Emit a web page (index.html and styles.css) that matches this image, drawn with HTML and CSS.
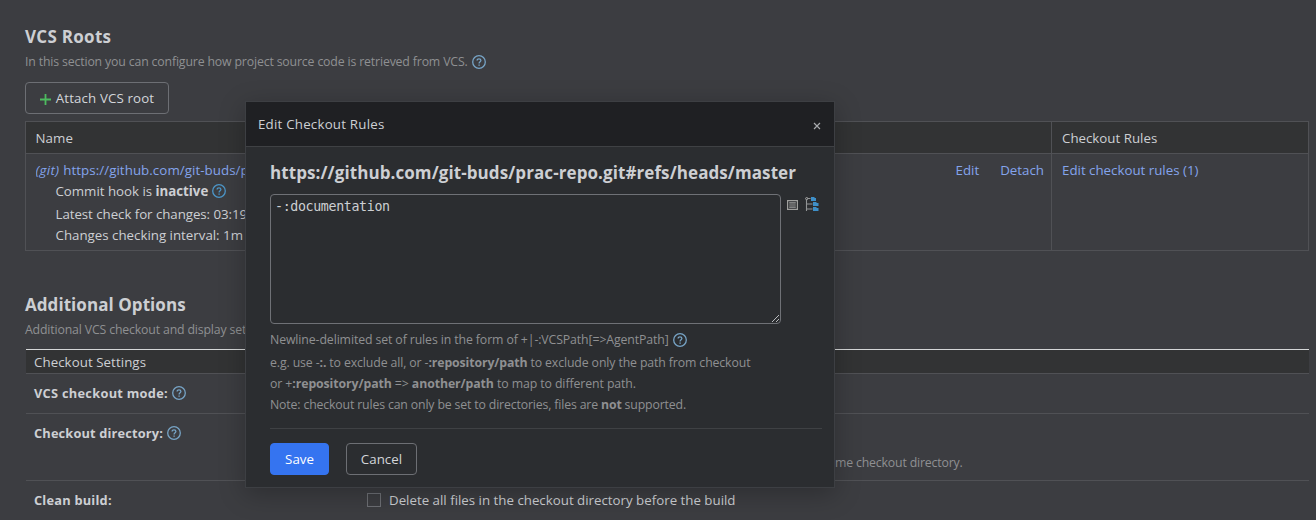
FILE: index.html
```
<!DOCTYPE html>
<html lang="en">
<head>
<meta charset="utf-8">
<title>Version Control Settings</title>
<link rel="stylesheet" href="styles.css">
</head>
<body>
<svg width="0" height="0" class="defs">
  <symbol id="help" viewBox="0 0 14 14">
    <circle cx="7" cy="7" r="6.3" fill="none" stroke="currentColor" stroke-width="1.3"/>
    <path d="M5.1 5.6C5.1 4.5 5.9 3.9 7 3.9s1.9.6 1.9 1.6C8.9 6.7 7.1 6.8 7.1 8.4" fill="none" stroke="currentColor" stroke-width="1.3"/>
    <path d="M6.4 9.4h1.4v1.3H6.4z" fill="currentColor"/>
  </symbol>
</svg>
<main class="page">
  <h2 class="heading"><span class="t-roots">VCS Roots</span></h2>
  <p class="desc"><span class="t-rootsdesc">In this section you can configure how project source code is retrieved from VCS.</span><svg class="help"><use href="#help"/></svg></p>
  <button class="btn attach"><svg width="11" height="11" viewBox="0 0 11 11"><path d="M5.5 0v11M0 5.5h11" stroke="#4dbb5f" stroke-width="1.8"/></svg><span class="t-attach">Attach VCS root</span></button>

  <div class="roots">
    <div class="roots-head">
      <div class="col-name"><span class="t-name">Name</span></div>
      <div class="col-rules"><span class="t-rules">Checkout Rules</span></div>
    </div>
    <div class="roots-body">
      <div class="col-name">
        <div class="root-info">
          <div class="root-url link"><i class="t-git">(git)</i><span class="t-url">https://github.com/git-buds/p</span></div>
          <div class="sub hook"><span class="t-hook">Commit hook is <b>inactive</b></span><svg class="help bright"><use href="#help"/></svg></div>
          <div class="sub"><span class="t-latest">Latest check for changes: 03:19</span></div>
          <div class="sub"><span class="t-interval">Changes checking interval: 1m</span></div>
        </div>
        <div class="actions"><a class="link t-edit">Edit</a><a class="link t-detach">Detach</a></div>
      </div>
      <div class="col-rules"><a class="link t-editrules">Edit checkout rules (1)</a></div>
    </div>
  </div>

  <h2 class="heading options"><span class="t-options">Additional Options</span></h2>
  <p class="desc"><span class="t-optdesc">Additional VCS checkout and display set</span></p>

  <div class="settings">
    <div class="set-title"><span class="t-settitle">Checkout Settings</span></div>
    <div class="set-row mode"><label><span class="t-mode">VCS checkout mode:</span><svg class="help"><use href="#help"/></svg></label></div>
    <div class="set-row directory"><label><span class="t-dir">Checkout directory:</span><svg class="help"><use href="#help"/></svg></label><div class="note"><span class="t-note">me checkout directory.</span></div></div>
    <div class="set-row clean"><label><span class="t-clean">Clean build:</span></label><div class="check"><span class="box"></span><span class="t-delete">Delete all files in the checkout directory before the build</span></div></div>
  </div>
</main>

<section class="modal">
  <header class="modal-head"><span class="t-modal">Edit Checkout Rules</span><svg width="8" height="8" viewBox="0 0 8 8"><path d="M1 1l6 6M7 1L1 7" stroke="#a9abae" stroke-width="1.15"/></svg></header>
  <div class="modal-body">
    <h3><span class="t-modalurl">https://github.com/git-buds/prac-repo.git#refs/heads/master</span></h3>
    <div class="editor">
      <div class="area"><span>-:documentation</span>
        <svg class="grip" width="9" height="9" viewBox="0 0 9 9"><path d="M1 8L8 1M5 8l3-3" stroke="#b9bbbe" stroke-width="1"/></svg>
      </div>
      <svg class="ic-list" width="11" height="10" viewBox="0 0 11 10"><path d="M.6 .6h9.8v8.8H.6z" fill="none" stroke="#a0a09e" stroke-width="1.2"/><path d="M2.2 2.9h6.6M2.2 5h6.6M2.2 7.1h6.6" stroke="#a0a09e" stroke-width="1.1"/></svg>
      <svg class="ic-tree" width="14" height="14" viewBox="0 0 14 14"><path d="M1.5 2.5V14M1.5 7h6M1.5 12h6M2.5 1.5h3" fill="none" stroke="#929496" stroke-width="1.1"/><circle cx="1.7" cy="1.6" r="1.1" fill="none" stroke="#a5a5a5"/><path d="M6 0h3l1 1h1v3H6zM8 5h3l1 1h1.5v3H8zM8 10h3l1 1h1.5v3H8z" fill="#3e8fc8"/></svg>
    </div>
    <div class="hint">
      <div><span class="t-h1">Newline-delimited set of rules in the form of +|-:VCSPath[=&gt;AgentPath]</span><svg class="help"><use href="#help"/></svg></div>
      <div><span class="t-h2">e.g. use -<b>:.</b> to exclude all, or -<b>:repository/path</b> to exclude only the path from checkout</span></div>
      <div><span class="t-h3">or +<b>:repository/path</b> =&gt; <b>another/path</b> to map to different path.</span></div>
      <div><span class="t-h4">Note: checkout rules can only be set to directories, files are <b>not</b> supported.</span></div>
    </div>
    <div class="footer">
      <button class="btn save"><span class="t-save">Save</span></button>
      <button class="btn cancel"><span class="t-cancel">Cancel</span></button>
    </div>
  </div>
</section>
</body>
</html>
```
FILE: styles.css
```
* { box-sizing: border-box; }
body { margin: 0; width: 1316px; height: 520px; overflow: hidden; position: relative; background: #3c3d41; color: #cdcfd3; font: 13.3px/20px "Open Sans", "Noto Sans", sans-serif; white-space: nowrap; }
.defs { position: absolute; }
h2, h3, p { margin: 0; }
b { font-weight: 700; }
.page { height: 520px; overflow: hidden; padding: 26px 7px 0 25px; }
.heading { height: 22px; font-size: 17px; line-height: 22px; font-weight: 700; }
.desc { display: flex; align-items: center; gap: 4px; height: 20px; margin-top: 4px; font-size: 12.3px; color: #8f9092; }
.help { width: 14px; height: 14px; color: #77a4c6; flex: none; }
.help.bright { color: #4c96c9; }
.btn { display: flex; align-items: center; justify-content: center; height: 32px; padding: 0; border: 1px solid #6d6f74; border-radius: 4px; background: transparent; color: #d3d5d9; font: inherit; }
.attach { width: 144px; gap: 5px; margin-top: 10px; }
.attach svg { margin-top: 2px; }
.link { color: #84a4ec; }

.roots { height: 130px; margin-top: 7px; border: 1px solid #505155; }
.roots-head { display: flex; height: 32px; background: #323334; border-bottom: 1px solid #505155; line-height: 32px; }
.roots-body { display: flex; height: 96px; }
.col-name { display: flex; justify-content: space-between; width: 1026px; padding: 0 7px 0 9.5px; border-right: 1px solid #505155; }
.col-rules { padding-left: 10px; }
.roots-body .col-name, .roots-body .col-rules { padding-top: 6px; }
.root-info { width: 210px; }
.root-url { display: flex; gap: 4px; height: 21px; overflow: hidden; }
.sub { display: flex; align-items: center; gap: 4px; height: 21px; padding-left: 20px; }
.hook { height: 22px; padding-bottom: 2px; }
.actions { display: flex; gap: 21px; }

.options { margin-top: 43px; }
.options + .desc { margin-top: 4px; }
.settings { margin: 9px 0 0 1px; }
.set-title { height: 25px; padding-left: 8px; background: #323334; border-top: 1px solid #d5d7d8; border-bottom: 1px solid #505155; line-height: 25px; }
.set-row { display: flex; padding: 0 0 0 8px; border-bottom: 1px solid #505155; }
.set-row label { display: flex; align-items: center; gap: 4px; width: 333px; height: 20px; font-weight: 700; font-size: 12.8px; }
.mode { height: 40px; padding-top: 9px; }
.directory { height: 67px; padding-top: 9px; }
.note { margin: 30px 0 0 468px; color: #8f9092; font-size: 12.3px; }
.clean { height: 50px; padding-top: 9px; border: 0; }
.check { display: flex; align-items: center; gap: 8px; height: 20px; }
.box { width: 14px; height: 14px; border: 1px solid #6d6f74; }

.modal { position: absolute; left: 245px; top: 101px; width: 590px; height: 387px; background: #2b2d30; border: 1px solid #3d3f43; box-shadow: 0 6px 24px rgba(0, 0, 0, .25); }
.modal-head { display: flex; align-items: center; justify-content: space-between; height: 45px; padding: 0 13.5px 0 12px; background: #1f2023; border-bottom: 1px solid #3f4144; }
.modal-head svg { margin-top: 3px; }
.modal-body { padding: 14px 12px 0 24px; }
.modal-body h3 { height: 24px; line-height: 24px; font-size: 17px; font-weight: 700; }
.editor { display: flex; align-items: flex-start; margin-top: 9px; }
.area { position: relative; flex: none; width: 511px; height: 130px; padding: 2px 4px; border: 1px solid #6f7176; border-radius: 4px; font: 13.3px/20px "DejaVu Sans Mono", monospace; letter-spacing: -.36px; }
.grip { position: absolute; right: 0; bottom: 0; }
.ic-list { margin: 6px 0 0 6px; }
.ic-tree { margin: 3px 0 0 7px; }
.hint { display: grid; grid-template-rows: 23px 21px 21px 21px; margin-top: 5px; font-size: 12.3px; color: #8f9092; }
.hint div { display: flex; align-items: center; gap: 4px; height: 22px; }
.hint span { white-space: pre; }
.footer { display: flex; gap: 17px; margin-top: 13px; padding-top: 14px; border-top: 1px solid #3f4144; }
.save { width: 59px; background: #3574f0; border-color: #3574f0; color: #fff; }
.cancel { width: 71px; }

/* letter fitting */
.t-roots { letter-spacing: .28px; }
.t-options { letter-spacing: .06px; }
.t-rootsdesc, .t-optdesc { letter-spacing: -.155px; }
.t-attach { letter-spacing: .13px; }
.t-name { letter-spacing: .1px; }
.t-url { letter-spacing: .07px; }
.t-git { letter-spacing: .3px; }
.t-hook { letter-spacing: -.02px; }
.t-latest { letter-spacing: -.05px; }
.t-settitle { letter-spacing: .06px; }
.t-mode { letter-spacing: .28px; }
.t-dir { letter-spacing: .16px; }
.t-clean { letter-spacing: .22px; }
.t-note { letter-spacing: -.17px; }
.t-modal { letter-spacing: .22px; }
.t-modalurl { letter-spacing: .085px; }
.t-h1 { letter-spacing: -.11px; }
.t-h2 { letter-spacing: -.12px; }
.t-h3 { letter-spacing: -.09px; }
.t-h4 { letter-spacing: -.155px; }
.t-cancel { letter-spacing: .05px; }
```
